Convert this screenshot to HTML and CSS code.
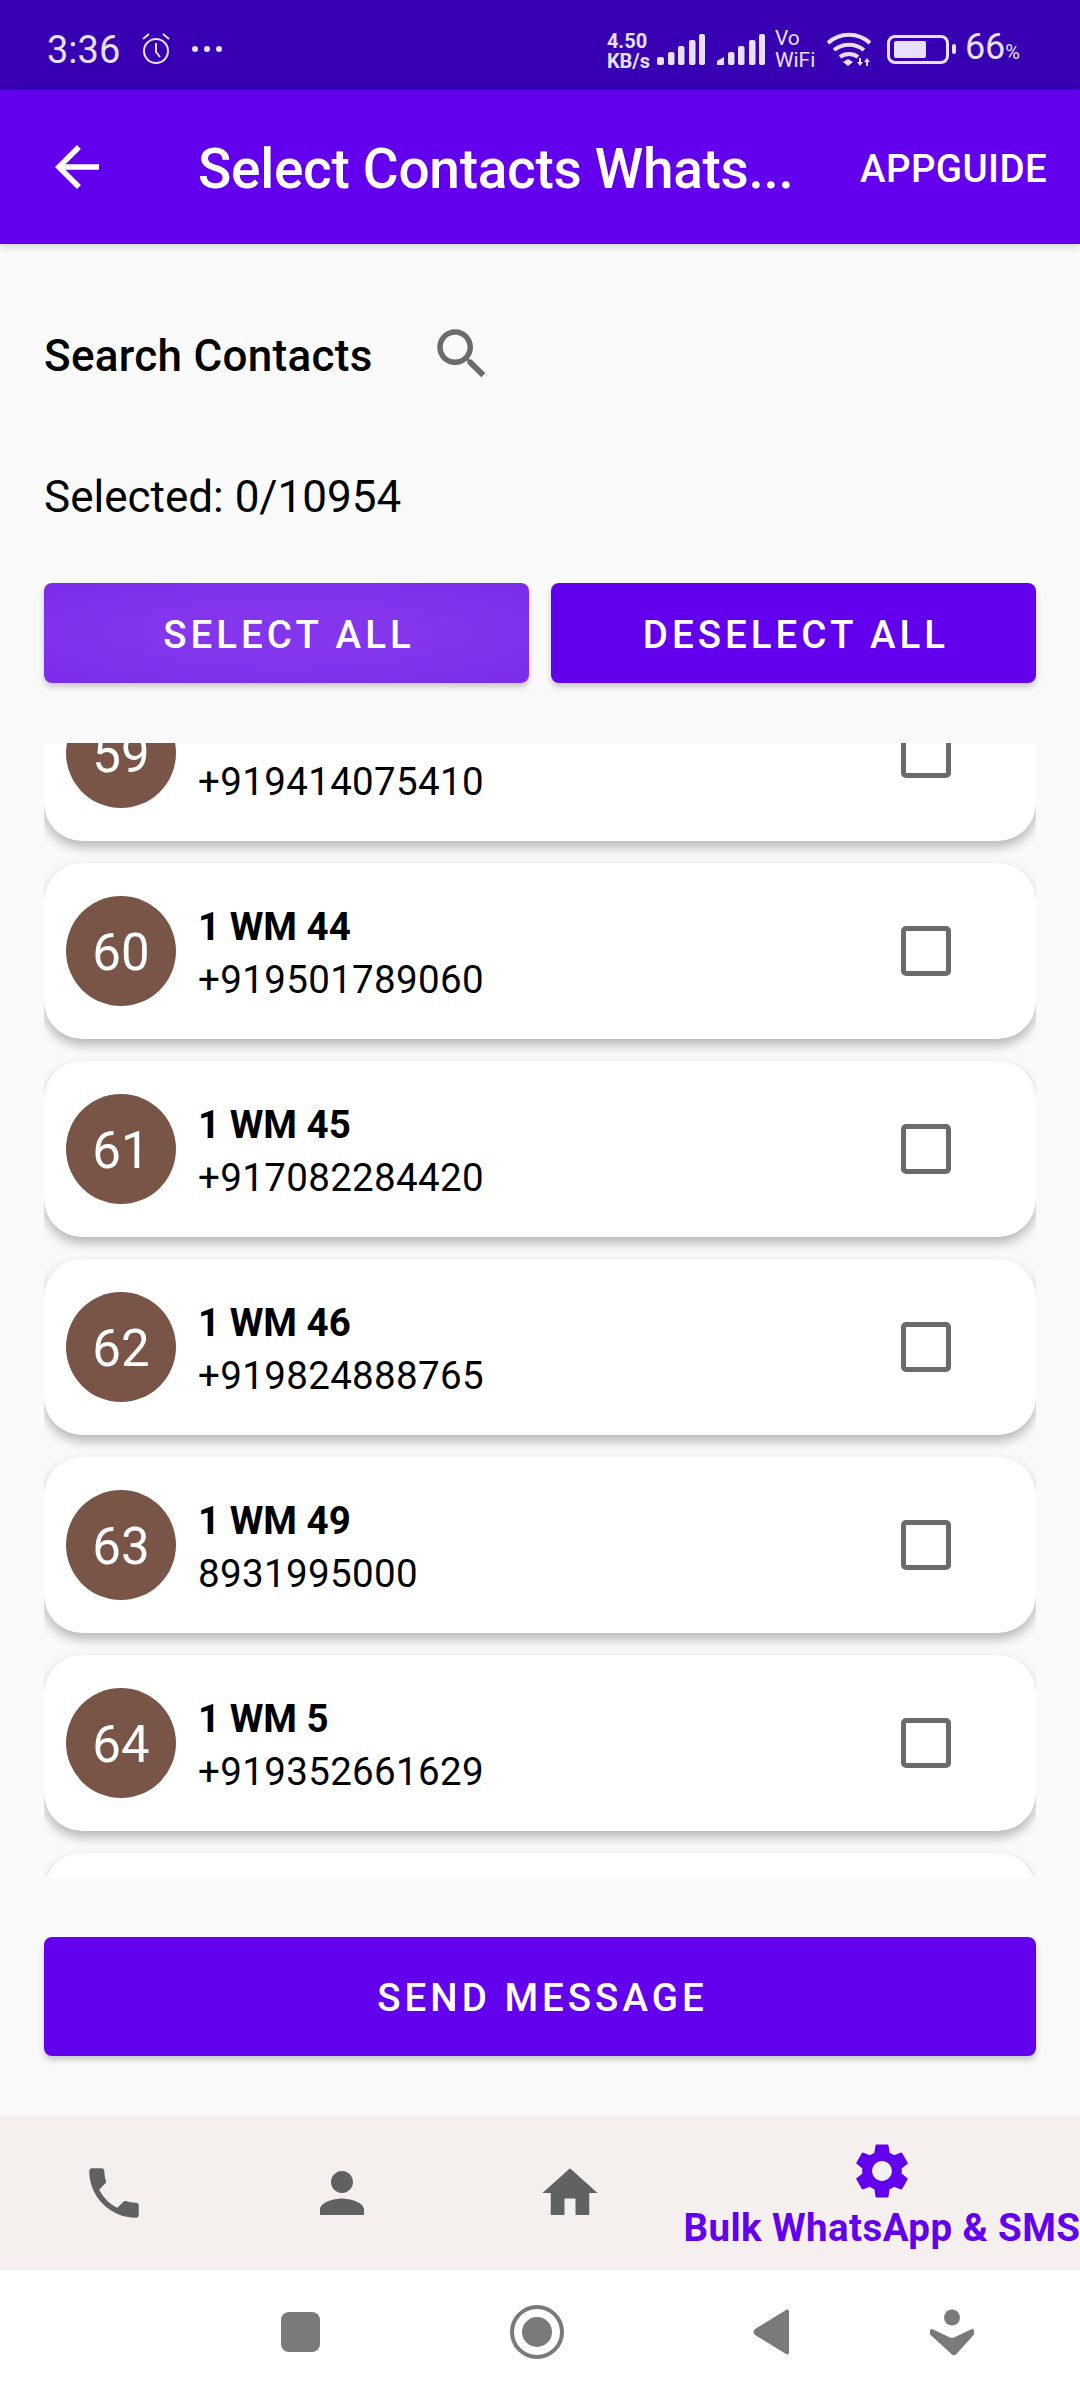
FILE: index.html
```html
<!DOCTYPE html>
<html>

<head>
    <title>Select Contacts WhatsApp</title>
    <link rel="stylesheet" href="styles.css">
</head>

<body>
    <div class="status-bar">
        <div class="status-left">
            <span class="time">3:36</span>
            <svg class="alarm" viewBox="0 0 32 36" fill="none" stroke="#e8e0fa" stroke-width="2">
                <circle cx="16" cy="20" r="12"></circle>
                <path d="M16 12v9l4 5M3 8l6-5M29 8l-6-5"></path>
            </svg>
            <span class="dots"><i></i><i></i><i></i></span>
        </div>
        <div class="status-right">
            <div class="speed"><span>4.50</span><span>KB/s</span></div>
            <svg class="signal" viewBox="0 0 48 32" fill="#e8e0fa">
                <rect x="0" y="24" width="7" height="8" rx="2"></rect>
                <rect x="11" y="19" width="6.5" height="13" rx="2"></rect>
                <rect x="21" y="13" width="6.5" height="19" rx="2"></rect>
                <rect x="32" y="7" width="6.5" height="25" rx="2"></rect>
                <rect x="42" y="1" width="6" height="31" rx="2"></rect>
            </svg>
            <svg class="signal second" viewBox="0 0 48 32" fill="#e8e0fa">
                <path d="M0 32v-4l7-4v8z"></path>
                <rect x="11" y="19" width="6.5" height="13" rx="2"></rect>
                <rect x="21" y="13" width="6.5" height="19" rx="2"></rect>
                <rect x="32" y="7" width="6.5" height="25" rx="2"></rect>
                <rect x="42" y="1" width="6" height="31" rx="2"></rect>
            </svg>
            <div class="vowifi"><span>Vo</span><span>WiFi</span></div>
            <svg class="wifi" viewBox="0 0 46 34" fill="none" stroke="#e8e0fa" stroke-width="4">
                <path d="M2 11C14 0 32 0 44 11M8 18c9-7 21-7 30 0M14 25c5-4 13-4 18 0"></path>
                <path d="M17 30l5-3 5 3-5 4z" fill="#e8e0fa" stroke="none"></path>
                <path d="M33 26h2v4h2l-3 4-3-4h2zM40 34h2v-4h2l-3-4-3 4h2z" fill="#e8e0fa" stroke="none"></path>
            </svg>
            <div class="battery"><div class="battery-fill"></div></div>
            <div class="battery-nub"></div>
            <span class="percent">66<small>%</small></span>
        </div>
    </div>

    <header class="app-bar">
        <svg class="back" viewBox="0 0 24 24" fill="#fff">
            <path d="M20 11H7.83l5.59-5.59L12 4l-8 8 8 8 1.41-1.41L7.83 13H20v-2z"></path>
        </svg>
        <h1 class="title">Select Contacts Whats...</h1>
        <span class="app-guide">APPGUIDE</span>
    </header>

    <main class="content">
        <div class="search-row">
            <span class="search-label">Search Contacts</span>
            <svg class="search-icon" viewBox="0 0 24 24" fill="#6b6b6b">
                <path d="M15.5 14h-.79l-.28-.27C15.41 12.59 16 11.11 16 9.5 16 5.91 13.09 3 9.5 3S3 5.91 3 9.5 5.91 16 9.5 16c1.61 0 3.09-.59 4.23-1.57l.27.28v.79l5 4.99L20.49 19l-4.99-5zm-6 0C7.01 14 5 11.99 5 9.5S7.01 5 9.5 5 14 7.01 14 9.5 11.99 14 9.5 14z"></path>
            </svg>
        </div>
        <p class="selected">Selected: 0/10954</p>
        <div class="actions">
            <button class="btn btn-pressed">SELECT ALL</button>
            <button class="btn">DESELECT ALL</button>
        </div>

        <div class="list">
            <div class="card card-first">
                <div class="avatar">59</div>
                <div class="info"><b>1 WM 43</b><span>+919414075410</span></div>
                <div class="check"></div>
            </div>
            <div class="card">
                <div class="avatar">60</div>
                <div class="info"><b>1 WM 44</b><span>+919501789060</span></div>
                <div class="check"></div>
            </div>
            <div class="card">
                <div class="avatar">61</div>
                <div class="info"><b>1 WM 45</b><span>+917082284420</span></div>
                <div class="check"></div>
            </div>
            <div class="card">
                <div class="avatar">62</div>
                <div class="info"><b>1 WM 46</b><span>+919824888765</span></div>
                <div class="check"></div>
            </div>
            <div class="card">
                <div class="avatar">63</div>
                <div class="info"><b>1 WM 49</b><span>8931995000</span></div>
                <div class="check"></div>
            </div>
            <div class="card">
                <div class="avatar">64</div>
                <div class="info"><b>1 WM 5</b><span>+919352661629</span></div>
                <div class="check"></div>
            </div>
            <div class="card"></div>
        </div>

        <button class="btn btn-send">SEND MESSAGE</button>
    </main>

    <nav class="bottom-nav">
        <div class="nav-item">
            <svg viewBox="0 0 24 24" fill="#616161">
                <path d="M6.62 10.79c1.44 2.83 3.76 5.14 6.59 6.59l2.2-2.2c.27-.27.67-.36 1.02-.24 1.12.37 2.33.57 3.57.57.55 0 1 .45 1 1V20c0 .55-.45 1-1 1-9.39 0-17-7.61-17-17 0-.55.45-1 1-1h3.5c.55 0 1 .45 1 1 0 1.25.2 2.45.57 3.57.11.35.03.74-.25 1.02l-2.2 2.2z"></path>
            </svg>
        </div>
        <div class="nav-item">
            <svg viewBox="0 0 24 24" fill="#616161">
                <path d="M12 12c2.21 0 4-1.79 4-4s-1.79-4-4-4-4 1.79-4 4 1.79 4 4 4zm0 2c-2.67 0-8 1.34-8 4v2h16v-2c0-2.66-5.33-4-8-4z"></path>
            </svg>
        </div>
        <div class="nav-item">
            <svg viewBox="0 0 24 24" fill="#616161">
                <path d="M10 20v-6h4v6h5v-8h3L12 3 2 12h3v8z"></path>
            </svg>
        </div>
        <div class="nav-item nav-active">
            <svg viewBox="0 0 24 24" fill="#6200ee">
                <path d="M19.14 12.94c.04-.3.06-.61.06-.94 0-.32-.02-.64-.07-.94l2.03-1.58c.18-.14.23-.41.12-.61l-1.92-3.32c-.12-.22-.37-.29-.59-.22l-2.39.96c-.5-.38-1.03-.7-1.62-.94l-.36-2.54c-.04-.24-.24-.41-.48-.41h-3.84c-.24 0-.43.17-.47.41l-.36 2.54c-.59.24-1.13.57-1.62.94l-2.39-.96c-.22-.08-.47 0-.59.22L2.74 8.87c-.12.21-.08.47.12.61l2.03 1.58c-.05.3-.09.63-.09.94s.02.64.07.94l-2.03 1.58c-.18.14-.23.41-.12.61l1.92 3.32c.12.22.37.29.59.22l2.39-.96c.5.38 1.03.7 1.62.94l.36 2.54c.05.24.24.41.48.41h3.84c.24 0 .44-.17.47-.41l.36-2.54c.59-.24 1.13-.56 1.62-.94l2.39.96c.22.08.47 0 .59-.22l1.92-3.32c.12-.22.07-.47-.12-.61l-2.01-1.58zM12 15.6c-1.98 0-3.6-1.62-3.6-3.6s1.62-3.6 3.6-3.6 3.6 1.62 3.6 3.6-1.62 3.6-3.6 3.6z"></path>
            </svg>
            <span class="nav-label">Bulk WhatsApp &amp; SMS</span>
        </div>
    </nav>

    <div class="system-nav">
        <div class="sys-square"></div>
        <div class="sys-circle"><div class="sys-dot"></div></div>
        <svg class="sys-back" viewBox="0 0 36 46" fill="#7a7a7a">
            <path d="M33 1c2-1 3 0 3 2v40c0 2-1 3-3 2L2 26c-2-2-2-4 0-6z"></path>
        </svg>
        <svg class="sys-person" viewBox="0 0 44 46" fill="#7a7a7a">
            <circle cx="22" cy="8" r="8"></circle>
            <path d="M3 20l17 8c1 .5 3 .5 4 0l17-8c2-1 3 0 3 2v3l-18 20c-1 1-3 1-4 0L0 25v-3c0-2 1-3 3-2z"></path>
        </svg>
    </div>
</body>

</html>
```

FILE: styles.css
```css
* {
    box-sizing: border-box;
}

body {
    margin: 0;
    width: 1080px;
    height: 2400px;
    overflow: hidden;
    display: flex;
    flex-direction: column;
    background-color: #fafafa;
    font-family: Roboto, "Noto Sans", sans-serif;
    color: #000;
}

.status-bar {
    height: 90px;
    background-color: #3700b3;
    color: #e8e0fa;
    display: flex;
    justify-content: space-between;
    align-items: center;
    padding: 8px 60px 0 47px;
}

.status-left,
.status-right {
    display: flex;
    align-items: center;
}

.time {
    font-size: 38px;
    line-height: 40px;
    padding-top: 2px;
}

.alarm {
    width: 32px;
    height: 36px;
    margin-left: 20px;
}

.dots {
    display: flex;
    gap: 6px;
    margin-left: 20px;
}

.dots i {
    width: 6px;
    height: 6px;
    border-radius: 50%;
    background-color: #e8e0fa;
}

.speed,
.vowifi {
    display: flex;
    flex-direction: column;
}

.speed {
    font-size: 20px;
    line-height: 20px;
    font-weight: 700;
    width: 50px;
    margin-top: 3px;
}

.signal {
    width: 48px;
    height: 32px;
}

.signal.second {
    margin-left: 12px;
}

.vowifi {
    font-size: 21px;
    line-height: 22px;
    font-weight: 400;
    margin-left: 10px;
    width: 51px;
}

.wifi {
    width: 46px;
    height: 34px;
}

.battery {
    width: 62px;
    height: 29px;
    margin-left: 15px;
    border: 3px solid #e8e0fa;
    border-radius: 8px;
    padding: 3px 4px;
}

.battery-fill {
    width: 32px;
    height: 17px;
    background-color: #e8e0fa;
    border-radius: 2px;
}

.battery-nub {
    width: 4px;
    height: 10px;
    margin-left: 3px;
    border-radius: 2px;
    background-color: #e8e0fa;
}

.percent {
    font-size: 36px;
    line-height: 40px;
    margin-left: 9px;
}

.percent small {
    font-size: 20px;
}

.app-bar {
    height: 154px;
    background-color: #6200ee;
    color: #fff;
    display: flex;
    align-items: center;
    padding-left: 44px;
    box-shadow: 0 3px 8px rgba(0, 0, 0, 0.15);
    position: relative;
}

.back {
    width: 66px;
    height: 66px;
    flex: none;
}

.title {
    margin: 4px 0 0 88px;
    font-size: 55px;
    font-weight: 500;
    letter-spacing: -0.3px;
    white-space: nowrap;
    width: 662px;
}

.app-guide {
    margin-top: 2px;
    font-size: 38.5px;
    font-weight: 500;
    letter-spacing: 0.4px;
}

.content {
    flex: 1;
    display: flex;
    flex-direction: column;
    padding: 0 44px;
}

.search-row {
    display: flex;
    align-items: center;
    margin-top: 79px;
    height: 66px;
}

.search-label {
    font-size: 44px;
    font-weight: 500;
    letter-spacing: 0.3px;
}

.search-icon {
    width: 66px;
    height: 66px;
    margin-left: 56px;
    margin-bottom: 4px;
}

.selected {
    margin: 0;
    margin-top: 82px;
    font-size: 44px;
    line-height: 52px;
}

.actions {
    display: flex;
    gap: 22px;
    margin-top: 60px;
}

.btn {
    flex: 1;
    height: 100px;
    padding: 2px 0 0 5px;
    border: none;
    border-radius: 8px;
    background-color: #6200ee;
    color: #fff;
    font-family: Roboto, sans-serif;
    font-size: 38.5px;
    font-weight: 500;
    letter-spacing: 4px;
    box-shadow: 0 4px 6px rgba(0, 0, 0, 0.2);
}

.btn-pressed {
    background: radial-gradient(ellipse at center, #8336ec 40%, #7b2bea 100%);
}

.list {
    height: 1134px;
    margin-top: 60px;
    overflow: hidden;
    display: flex;
    flex-direction: column;
    gap: 22px;
}

.card {
    flex: none;
    height: 176px;
    background-color: #fff;
    border-radius: 38px;
    box-shadow: 0 6px 12px rgba(0, 0, 0, 0.28);
    display: flex;
    align-items: center;
    padding: 0 0 0 22px;
}

.card-first {
    margin-top: -78px;
}

.avatar {
    width: 110px;
    height: 110px;
    padding-top: 2px;
    border-radius: 50%;
    background-color: #795548;
    color: #fff;
    font-size: 51px;
    display: flex;
    align-items: center;
    justify-content: center;
    flex: none;
}

.info {
    display: flex;
    flex-direction: column;
    margin-left: 22px;
    padding-top: 4px;
    width: 703px;
    font-size: 38.5px;
    line-height: 53px;
}

.info span {
    letter-spacing: 0.35px;
}

.check {
    width: 50px;
    height: 50px;
    border: 5px solid #6b6b6b;
    border-radius: 5px;
}

.btn-send {
    flex: none;
    height: 119px;
    margin-top: 60px;
}

.bottom-nav {
    height: 155px;
    background-color: #f5f0ee;
    display: flex;
}

.nav-item {
    width: 228px;
    display: flex;
    flex-direction: column;
    align-items: center;
    padding-top: 45px;
}

.nav-item svg {
    width: 66px;
    height: 66px;
    flex: none;
}

.nav-active {
    width: 396px;
    padding-top: 23px;
}

.nav-label {
    font-size: 38.5px;
    font-weight: 700;
    letter-spacing: 0.4px;
    line-height: 47px;
    color: #6200ee;
    white-space: nowrap;
}

.system-nav {
    height: 130px;
    background-color: #fff;
    display: flex;
    align-items: center;
    padding: 0 0 6px 281px;
}

.sys-square {
    width: 39px;
    height: 40px;
    border-radius: 8px;
    background-color: #7a7a7a;
}

.sys-circle {
    width: 54px;
    height: 54px;
    margin-left: 190px;
    border: 4px solid #7a7a7a;
    border-radius: 50%;
    display: flex;
    align-items: center;
    justify-content: center;
}

.sys-dot {
    width: 30px;
    height: 30px;
    border-radius: 50%;
    background-color: #7a7a7a;
}

.sys-back {
    width: 36px;
    height: 46px;
    margin-left: 189px;
}

.sys-person {
    width: 44px;
    height: 47px;
    margin-left: 141px;
}
```
